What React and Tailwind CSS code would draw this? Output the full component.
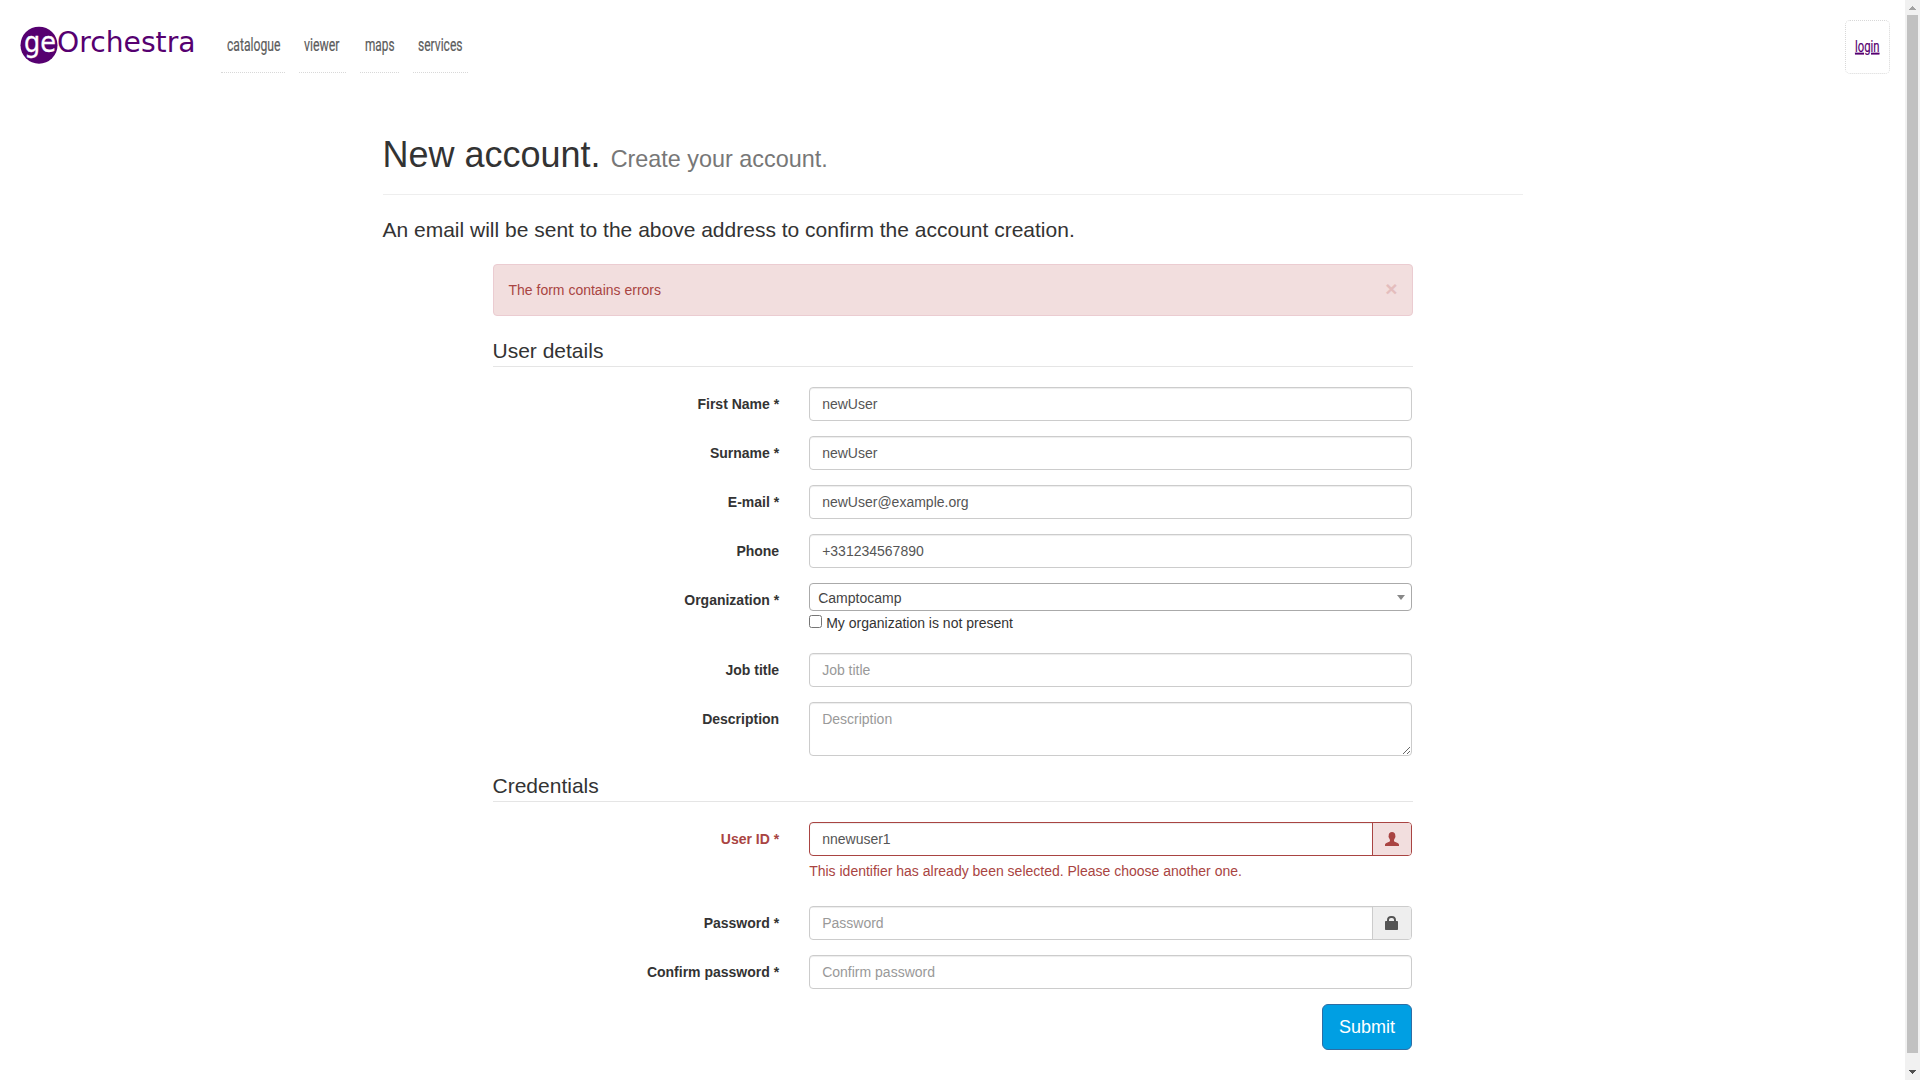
import React from "react";

function SqueezedText({ text, x, y, width, className }) {
  return (
    <text x={x} y={y} textLength={width} lengthAdjust="spacingAndGlyphs" className={className}>
      {text}
    </text>
  );
}

function Logo() {
  return (
    <svg width="190" height="48" viewBox="0 0 190 48" className="block overflow-visible">
      <circle cx="19" cy="19.2" r="18.5" fill="#560070" />
      <SqueezedText text="ge" x="4" y="26" width="32" className="fill-white stroke-white stroke-[0.3px] text-[28px] font-['DejaVu_Sans',sans-serif]" />
      <SqueezedText text="Orchestra" x="37" y="26.3" width="138.5" className="fill-[#560070] text-[28.5px] font-['DejaVu_Sans',sans-serif]" />
    </svg>
  );
}

const links = [
  { text: "catalogue", box: "w-16 mr-3.5", w: 53.5, x: 6 },
  { text: "viewer", box: "w-[47px] mr-3.5", w: 35.5, x: 5 },
  { text: "maps", box: "w-[39px] mr-3.5", w: 29.5, x: 5 },
  { text: "services", box: "w-[55px]", w: 44.5, x: 5 },
];

function Header() {
  return (
    <header className="flex h-[90px] items-start pl-5 pr-[15px]">
      <div className="mt-[26px] w-[201px] shrink-0">
        <Logo />
      </div>
      <nav className="flex">
        {links.map((l) => (
          <a key={l.text} className={`mt-5 h-[53px] border-b border-dotted border-[#d8d8d8] ${l.box}`}>
            <svg className="block h-10 w-full overflow-visible">
              <SqueezedText text={l.text} x={l.x} y="30.800" width={l.w} className="fill-[#5c5c5c] stroke-[#5c5c5c] stroke-[0.2px] text-[18px] font-['Roboto',sans-serif]" />
            </svg>
          </a>
        ))}
      </nav>
      <a className="ml-auto mt-5 h-[54px] w-[45px] rounded-[5px] border border-dotted border-[#d8d8d8]">
        <svg className="block h-10 w-full overflow-visible">
          <SqueezedText text="login" x="9" y="30.8" width="24.500" className="fill-[#560070] stroke-[#560070] stroke-[0.2px] text-[17px] underline font-['Roboto',sans-serif]" />
        </svg>
      </a>
    </header>
  );
}

const field =
  "block h-[34px] w-full rounded border border-[#ccc] bg-white px-3 py-1.5 text-sm leading-5 text-[#555] shadow-[inset_0_1px_1px_rgba(0,0,0,0.075)] outline-none placeholder:text-[#999]";

function Row({ label, error, children }) {
  return (
    <div className="mb-[15px] mr-px flex">
      <label className={`w-[286.67px] shrink-0 pt-[7px] text-right font-bold ${error ? "text-[#a94442]" : ""}`}>{label}</label>
      <div className="ml-[30px] flex-1">{children}</div>
    </div>
  );
}

function Legend({ children }) {
  return <h2 className="mb-5 h-[31px] border-b border-[#e5e5e5] text-[21px] leading-[30px]">{children}</h2>;
}

function UserIcon() {
  return (
    <svg width="14" height="14" viewBox="0 0 14 14" fill="currentColor">
      <path d="M7 0C4.900 0 3.700 1.400 3.700 3.500C3.700 4.200 3.400 4.300 3.600 5C3.800 5.700 4.100 5.800 4.200 6.300C4.400 7.200 5 7.700 5 8.300C5 9.400 4.600 9.700 3.600 10.100L1.400 11.100C.4 11.600 0 12.100 0 12.900V14H14V12.900C14 12.100 13.600 11.600 12.600 11.100L10.400 10.100C9.400 9.700 9 9.400 9 8.300C9 7.700 9.600 7.200 9.800 6.300C9.900 5.800 10.200 5.700 10.400 5C10.600 4.300 10.300 4.200 10.300 3.500C10.300 1.400 9.100 0 7 0Z" />
    </svg>
  );
}

function LockIcon() {
  return (
    <svg width="14" height="14" viewBox="0 0 14 14" fill="currentColor">
      <path fillRule="evenodd" d="M2 5V4C2 1.500 3.700 0 6 0H7C9.300 0 11 1.500 11 4V5H12C12.600 5 13 5.400 13 6V13C13 13.600 12.600 14 12 14H1C.4 14 0 13.600 0 13V6C0 5.400 .4 5 1 5ZM4 5H9V4C9 2.700 8.200 2 7 2H6C4.800 2 4 2.700 4 4Z" />
    </svg>
  );
}

function Scrollbar() {
  return (
    <div className="flex h-full w-[15px] shrink-0 flex-col items-center bg-[#f1f1f1]">
      <svg width="15" height="15" className="block shrink-0" shapeRendering="crispEdges">
        <path d="M4 10L7.500 6L11 10Z" fill="#a3a3a3" />
      </svg>
      <div className="h-[1038px] w-[11px] bg-[#c1c1c1]" />
      <svg width="15" height="15" className="mt-3 block shrink-0" shapeRendering="crispEdges">
        <path d="M4 5L7.500 9L11 5Z" fill="#505050" />
      </svg>
    </div>
  );
}

export default function App() {
  return (
    <div className="flex h-[1080px] w-[1920px] overflow-hidden bg-white font-['Liberation_Sans',Arial,sans-serif] text-sm leading-5 text-[#333]">
      <div className="flex-1">
        <Header />
        <main className="mx-auto w-[1140px] pt-[45px]">
          <h1 className="mb-5 border-b border-[#eee] pb-[19px] text-[36px] leading-[39.6px]">
            New account. <small className="text-[23.4px] leading-none text-[#777]">Create your account.</small>
          </h1>
          <p className="mb-5 text-[21px] leading-[29.4px]">An email will be sent to the above address to confirm the account creation.</p>
          <form className="ml-[110px] w-[920px]">
            <div className="mb-5 flex h-[52px] items-start justify-between rounded border border-[#ebccd1] bg-[#f2dede] py-[15px] pl-[15px] pr-3.5 text-[#a94442]">
              <span>The form contains errors</span>
              <button type="button" className="-mt-0.5 h-[21px] text-[21px] font-bold leading-[21px] text-[#e4bdbd]">×</button>
            </div>
            <Legend>User details</Legend>
            <Row label="First Name *"><input className={field} defaultValue="newUser" /></Row>
            <Row label="Surname *"><input className={field} defaultValue="newUser" /></Row>
            <Row label="E-mail *"><input className={field} defaultValue="newUser@example.org" /></Row>
            <Row label="Phone"><input className={field} defaultValue="+331234567890" /></Row>
            <Row label="Organization *">
              <div className="flex h-7 items-center justify-between rounded border border-[#aaa] pl-2 pr-1.5 text-[#444]">
                <span className="pt-0.5">Camptocamp</span>
                <span className="h-0 w-0 border-x-4 border-t-[5px] border-x-transparent border-t-[#888]" />
              </div>
              <div className="flex h-[27px] items-start pt-1">
                <input type="checkbox" className="mr-1 h-[13px] w-[13px]" />
                <span className="leading-4">My organization is not present</span>
              </div>
            </Row>
            <Row label="Job title"><input className={field} placeholder="Job title" /></Row>
            <Row label="Description"><textarea className={`${field} h-[54px]`} placeholder="Description" /></Row>
            <Legend>Credentials</Legend>
            <Row label="User ID *" error>
              <div className="flex h-[34px] overflow-hidden rounded border border-[#a94442]">
                <input className="min-w-0 flex-1 px-3 text-[#555] shadow-[inset_0_1px_1px_rgba(0,0,0,0.075)] outline-none" defaultValue="nnewuser1" />
                <span className="flex w-[39px] items-center border-l border-[#a94442] bg-[#f2dede] pl-3 text-[#a94442]"><UserIcon /></span>
              </div>
              <p className="mb-2.5 mt-[5px] text-[#a94442]">This identifier has already been selected. Please choose another one.</p>
            </Row>
            <Row label="Password *">
              <div className="flex h-[34px] overflow-hidden rounded border border-[#ccc]">
                <input className="min-w-0 flex-1 px-3 shadow-[inset_0_1px_1px_rgba(0,0,0,0.075)] outline-none placeholder:text-[#999]" placeholder="Password" />
                <span className="flex w-[39px] items-center border-l border-[#ccc] bg-[#eee] pl-3 text-[#555]"><LockIcon /></span>
              </div>
            </Row>
            <Row label="Confirm password *"><input className={field} placeholder="Confirm password" /></Row>
            <div className="mr-px flex justify-end">
              <button type="button" className="h-[46px] w-[90px] rounded-md border border-[#2e6da4] bg-[#009fe3] pl-px text-lg leading-6 text-white">Submit</button>
            </div>
          </form>
        </main>
      </div>
      <Scrollbar />
    </div>
  );
}
